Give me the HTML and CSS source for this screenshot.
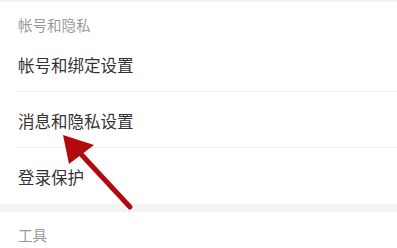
FILE: index.html
```html
<!DOCTYPE html>
<html lang="zh">
<head>
<meta charset="utf-8">
<link rel="stylesheet" href="styles.css">
</head>
<body>
<div class="page">
  <div class="topband"></div>
  <div class="section-title">帐号和隐私</div>
  <div class="list">
    <div class="row">帐号和绑定设置</div>
    <div class="row">消息和隐私设置</div>
    <div class="row last">登录保护</div>
  </div>
  <div class="band"></div>
  <div class="section-title">工具</div>
  <svg class="arrow" width="397" height="248" viewBox="0 0 397 248">
    <line x1="79" y1="152" x2="130" y2="207" stroke="#b10a0e" stroke-width="5" stroke-linecap="round"/>
    <polygon points="63,135 94,145 69,164" fill="#b10a0e"/>
  </svg>
</div>
</body>
</html>
```
FILE: styles.css
```css
html, body {
  margin: 0;
  padding: 0;
  background: #ffffff;
}
.page {
  position: relative;
  width: 397px;
  height: 248px;
  overflow: hidden;
  font-family: "Noto Sans CJK SC", "Noto Sans", sans-serif;
}
.topband {
  height: 2px;
  background: #f2f2f2;
}
.section-title {
  padding: 13px 0 1px 18px;
  line-height: 20px;
  font-size: 14.5px;
  color: #9a9a9a;
}
.list {
  display: flex;
  flex-direction: column;
}
.row {
  height: 55px;
  margin-left: 17px;
  padding-left: 1px;
  padding-top: 2px;
  box-sizing: border-box;
  border-bottom: 1px solid #f0f0f0;
  display: flex;
  align-items: center;
  font-size: 16.5px;
  color: #333333;
}
.row {
  height: 56px;
}
.row.last {
  border-bottom: none;
}
.band {
  height: 8px;
  background: #f4f4f4;
}
.arrow {
  position: absolute;
  left: 0;
  top: 0;
}
```
